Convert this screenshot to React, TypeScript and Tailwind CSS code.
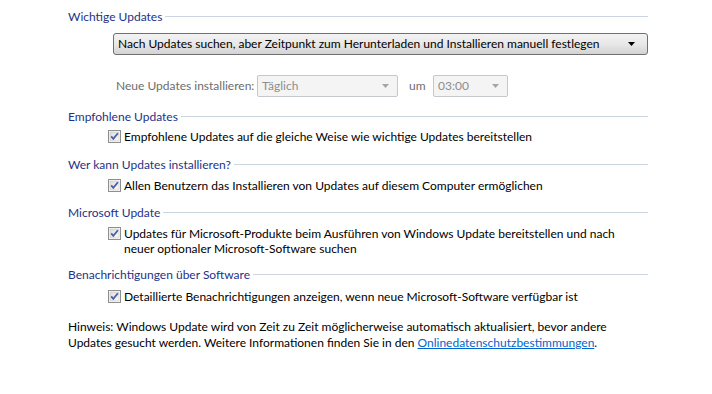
const font = { fontFamily: 'Lato, "Open Sans", sans-serif' };

function Heading({ children }: { children: string }) {
  return (
    <div className="flex items-center gap-[3px] h-[15px]">
      <span className="text-[#1e3287] whitespace-nowrap leading-[15px]">{children}</span>
      <div className="flex-1 h-px bg-[#ccd5e0]" />
    </div>
  );
}

function CheckBox() {
  return (
    <svg width="13" height="13" viewBox="0 0 13 13" className="shrink-0">
      <defs>
        <linearGradient id="cb" x1="0" y1="0" x2="1" y2="1">
          <stop offset="0" stopColor="#dcdcdc" />
          <stop offset="1" stopColor="#fbfbfb" />
        </linearGradient>
      </defs>
      <rect x="0.5" y="0.5" width="12" height="12" fill="#ffffff" stroke="#8e8f8f" />
      <rect x="2" y="2" width="9" height="9" fill="url(#cb)" stroke="#c3c3c3" strokeWidth="0.6" />
      <path d="M3.2 6.4 L5.3 8.8 L9.9 3.2" fill="none" stroke="#4c61a0" strokeWidth="1.8" />
    </svg>
  );
}

function CheckRow({ children }: { children: React.ReactNode }) {
  return (
    <div className="flex items-start ml-[40px]">
      <div className="pt-[1px]">
        <CheckBox />
      </div>
      <div className="ml-[3px] leading-[15px] whitespace-nowrap">{children}</div>
    </div>
  );
}

function Arrow({ color }: { color: string }) {
  return (
    <svg width="7" height="4" viewBox="0 0 7 4">
      <path d="M0 0 H7 L3.5 4 Z" fill={color} />
    </svg>
  );
}

function DisabledSelect({ value, width }: { value: string; width: string }) {
  return (
    <div
      className={`${width} h-[22px] flex items-center justify-between border border-[#c4c8cc] rounded-[2px] bg-[#f4f4f4] pl-[4px] pr-[8px] text-[#8d8d8d]`}
    >
      <span>{value}</span>
      <Arrow color="#a5a5a5" />
    </div>
  );
}

export default function App() {
  return (
    <div className="w-[712px] h-[394px] bg-white text-[12px] text-black overflow-hidden" style={font}>
      <div className="ml-[68px] w-[580px] pt-[9px]">
        <Heading>Wichtige Updates</Heading>

        <div className="mt-[9px] ml-[45px] h-[22px] flex items-center justify-between border border-[#707070] rounded-[3px] bg-gradient-to-b from-[#f3f3f3] via-[#e8e8e8] to-[#d3d3d3] pl-[4px] pr-[12px]">
          <span className="whitespace-nowrap">
            Nach Updates suchen, aber Zeitpunkt zum Herunterladen und Installieren manuell festlegen
          </span>
          <Arrow color="#000000" />
        </div>

        <div className="mt-[20px] ml-[48px] flex items-center h-[22px]">
          <span className="text-[#6d6d6d] w-[141px] whitespace-nowrap">Neue Updates installieren:</span>
          <DisabledSelect value="Täglich" width="w-[141px]" />
          <span className="text-[#6d6d6d] ml-[11px] w-[24px]">um</span>
          <DisabledSelect value="03:00" width="w-[75px]" />
        </div>

        <div className="mt-[12px]">
          <Heading>Empfohlene Updates</Heading>
        </div>
        <div className="mt-[5px]">
          <CheckRow>Empfohlene Updates auf die gleiche Weise wie wichtige Updates bereitstellen</CheckRow>
        </div>

        <div className="mt-[13px]">
          <Heading>Wer kann Updates installieren?</Heading>
        </div>
        <div className="mt-[6px]">
          <CheckRow>Allen Benutzern das Installieren von Updates auf diesem Computer ermöglichen</CheckRow>
        </div>

        <div className="mt-[12px]">
          <Heading>Microsoft Update</Heading>
        </div>
        <div className="mt-[6px]">
          <CheckRow>
            Updates für Microsoft-Produkte beim Ausführen von Windows Update bereitstellen und nach
            <br />
            neuer optionaler Microsoft-Software suchen
          </CheckRow>
        </div>

        <div className="mt-[11px]">
          <Heading>Benachrichtigungen über Software</Heading>
        </div>
        <div className="mt-[7px]">
          <CheckRow>Detaillierte Benachrichtigungen anzeigen, wenn neue Microsoft-Software verfügbar ist</CheckRow>
        </div>

        <p className="mt-[15px] leading-[16px] whitespace-nowrap">
          Hinweis: Windows Update wird von Zeit zu Zeit möglicherweise automatisch aktualisiert, bevor andere
          <br />
          Updates gesucht werden. Weitere Informationen finden Sie in den{" "}
          <a className="text-[#0066cc] underline">Onlinedatenschutzbestimmungen</a>.
        </p>
      </div>
    </div>
  );
}
